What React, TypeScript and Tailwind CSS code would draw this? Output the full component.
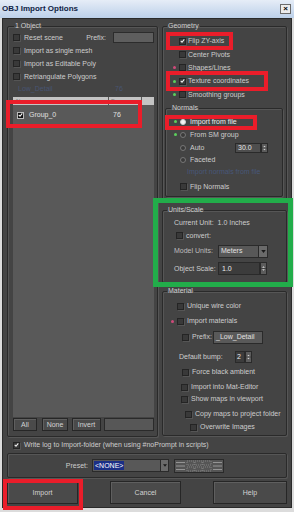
import React from 'react';

const Check = ({ on = false }: { on?: boolean }) => (
  <span className="inline-flex w-[7px] h-[7px] shrink-0 items-center justify-center border border-[#242424] bg-[#393939] shadow-[1px_1px_0_#555]">
    {on && (
      <svg viewBox="0 0 7 7" className="w-[6px] h-[6px]">
        <path d="M1 3.4 L2.8 5.2 L6 1.2" fill="none" stroke="#f4f4f4" strokeWidth="1.5" />
      </svg>
    )}
  </span>
);

const Radio = ({ on = false }: { on?: boolean }) =>
  on ? (
    <span className="w-[6px] h-[6px] shrink-0 rounded-full bg-[#f4f4f4] border border-[#cfcfcf]" />
  ) : (
    <span className="w-[6px] h-[6px] shrink-0 rounded-full bg-[#3a3a3a] border border-[#777]" />
  );

const Dot = ({ c }: { c: string }) => <span className={`w-[3px] h-[3px] shrink-0 rounded-full ${c}`} />;

const Spin = ({ h = 'h-[10px]' }: { h?: string }) => (
  <span className={`w-[7px] ${h} flex flex-col border border-[#2a2a2a] bg-[#5c5c5c]`}>
    <svg viewBox="0 0 7 10" className="w-full h-full">
      <path d="M1.5 4 L3.5 2 L5.5 4 Z M1.5 6 L3.5 8 L5.5 6 Z" fill="#d8d8d8" />
      <line x1="0" y1="5" x2="7" y2="5" stroke="#2a2a2a" strokeWidth="0.8" />
    </svg>
  </span>
);

const Btn = ({ children, w }: { children: React.ReactNode; w: string }) => (
  <div className={`${w} h-full flex items-center justify-center bg-[#4a4a4a] border border-[#262626] shadow-[inset_1px_1px_0_#5f5f5f] text-[#d2d2d2]`}>
    {children}
  </div>
);

const GROUP = 'min-w-0 border border-[#2a2a2a] rounded-[2px] shadow-[1px_1px_0_#565656,inset_1px_1px_0_#565656] p-0 m-0';

export default function App() {
  return (
    <div className="relative w-[294px] h-[512px] overflow-hidden bg-[#dcdcdc] flex flex-col text-[7px] leading-[8px] text-[#cdcdcd] font-['Liberation_Sans',Arial,sans-serif]">
      {/* title bar */}
      <div className="h-[18px] shrink-0 flex items-center justify-between pl-[2px] pr-[3px] bg-linear-to-b from-[#e6edf7] to-[#bcd0e9]">
        <span className="font-bold text-[8px] text-[#0f1d44]">OBJ Import Options</span>
        <span className="w-[11px] h-[10px] flex items-center justify-center bg-[#ececec] border border-[#6b6b6b] text-[8px] font-bold text-black leading-none">
          ×
        </span>
      </div>

      {/* body */}
      <div className="flex-1 mx-[2px] mb-[4px] bg-[#444444] border border-[#2a2a2a] flex flex-col px-[4px] pt-[3px]">
        <div className="flex gap-[4px] items-start">
          {/* 1 Object */}
          <fieldset className={`${GROUP} w-[151px]`}>
            <legend className="ml-[6px] px-[1px] leading-[8px] text-[#cfcfcf]">1 Object</legend>
            <div className="flex flex-col pl-[5px] pr-[3px] pt-[1px] pb-[5px]">
              <div className="h-[13px] flex items-center gap-[4px]">
                <Check />
                <span>Reset scene</span>
                <span className="ml-auto mr-[3px]">Prefix:</span>
                <span className="w-[41px] h-[11px] bg-[#5e5e5e] border border-[#2c2c2c]" />
              </div>
              <div className="h-[13px] flex items-center gap-[4px]">
                <Check />
                <span>Import as single mesh</span>
              </div>
              <div className="h-[13px] flex items-center gap-[4px]">
                <Check />
                <span>Import as Editable Poly</span>
              </div>
              <div className="h-[13px] flex items-center gap-[4px]">
                <Check />
                <span>Retriangulate Polygons</span>
              </div>
              <div className="h-[12px] flex items-center pl-[5px] text-[#4a5d86] opacity-70">
                <span className="w-[97px]">Low_Detail</span>
                <span>76</span>
              </div>
              <div className="mt-[2px] h-[320px] bg-[#595959] flex flex-col">
                <div className="h-[8px] flex gap-[1px] text-[#7a7a7a] text-[6px] leading-[8px]">
                  <span className="w-[95px] bg-[#c4c4c4] pl-[3px]">Name</span>
                  <span className="w-[32px] bg-[#c4c4c4] pl-[2px]">Faces</span>
                  <span className="flex-1 bg-[#c4c4c4]" />
                </div>
                <div className="h-[20px] flex items-center pl-[4px]">
                  <div className="w-[96px] flex items-center gap-[5px]">
                    <span className="inline-flex w-[7px] h-[7px] items-center justify-center bg-[#111] border border-[#bbb]">
                      <svg viewBox="0 0 7 7" className="w-[6px] h-[6px]">
                        <path d="M1 3.4 L2.8 5.2 L6 1.2" fill="none" stroke="#fff" strokeWidth="1.5" />
                      </svg>
                    </span>
                    <span className="text-[#e0e0e0]">Group_0</span>
                  </div>
                  <span className="text-[#e0e0e0]">76</span>
                </div>
              </div>
              <div className="mt-[1px] h-[13px] flex">
                <Btn w="w-[24px]">All</Btn>
                <div className="w-[5px]" />
                <Btn w="w-[26px]">None</Btn>
                <div className="w-[4px]" />
                <Btn w="w-[29px]">Invert</Btn>
                <div className="w-[3px]" />
                <span className="flex-1 h-full bg-[#575757] border border-[#2a2a2a]" />
              </div>
            </div>
          </fieldset>

          {/* right column */}
          <div className="w-[125px] flex flex-col">
            <fieldset className={GROUP}>
              <legend className="ml-[4px] px-[1px] leading-[8px] text-[#cfcfcf]">Geometry</legend>
              <div className="flex flex-col pt-[4px] pb-[2px]">
                <div className="h-[14px] flex items-center pl-[10px] gap-[3px]">
                  <span className="w-[3px]" />
                  <Check on />
                  <span className="ml-[-1px]">Flip ZY-axis</span>
                </div>
                <div className="h-[13px] flex items-center pl-[10px] gap-[3px]">
                  <span className="w-[3px]" />
                  <Check />
                  <span className="ml-[-1px]">Center Pivots</span>
                </div>
                <div className="h-[13px] flex items-center pl-[10px] gap-[3px]">
                  <Dot c="bg-[#d04a7a]" />
                  <Check />
                  <span className="ml-[-1px]">Shapes/Lines</span>
                </div>
                <div className="h-[14px] flex items-center pl-[10px] gap-[3px]">
                  <Dot c="bg-[#5ccf5c]" />
                  <Check on />
                  <span className="ml-[-1px]">Texture coordinates</span>
                </div>
                <div className="h-[13px] flex items-center pl-[10px] gap-[3px]">
                  <Dot c="bg-[#5ccf5c]" />
                  <Check />
                  <span className="ml-[-1px]">Smoothing groups</span>
                </div>

                <fieldset className={`${GROUP} mt-[3px] ml-[2px] mr-[3px]`}>
                  <legend className="ml-[5px] px-[1px] leading-[8px] text-[#cfcfcf]">Normals</legend>
                  <div className="flex flex-col pt-[3px] pb-[3px]">
                    <div className="h-[13px] flex items-center pl-[8px]">
                      <Dot c="bg-[#5ccf5c]" />
                      <span className="w-[3px]" />
                      <Radio on />
                      <span className="ml-[4px] text-[#ececec]">Import from file</span>
                    </div>
                    <div className="h-[13px] flex items-center pl-[8px]">
                      <Dot c="bg-[#5ccf5c]" />
                      <span className="w-[3px]" />
                      <Radio />
                      <span className="ml-[4px]">From SM group</span>
                    </div>
                    <div className="h-[13px] flex items-center pl-[14px] pr-[14px]">
                      <Radio />
                      <span className="ml-[4px]">Auto</span>
                      <span className="ml-auto w-[26px] h-[10px] bg-[#4e4e4e] border border-[#2a2a2a] text-[#e6e6e6] pl-[2px] leading-[8px]">
                        30.0
                      </span>
                      <Spin />
                    </div>
                    <div className="h-[12px] flex items-center pl-[14px]">
                      <Radio />
                      <span className="ml-[4px]">Faceted</span>
                    </div>
                    <div className="h-[12px] flex items-center pl-[21px] text-[#4a5d86] opacity-80">
                      Import normals from file
                    </div>
                    <div className="mt-[2px] h-[13px] flex items-center pl-[14px] gap-[3px]">
                      <Check />
                      <span>Flip Normals</span>
                    </div>
                  </div>
                </fieldset>
              </div>
            </fieldset>

            <fieldset className={`${GROUP} mt-[6px]`}>
              <legend className="ml-[4px] px-[1px] leading-[8px] text-[#cfcfcf]">Units/Scale</legend>
              <div className="flex flex-col pt-[3px] pb-[6px]">
                <div className="h-[12px] flex items-center pl-[11px]">Current Unit:&nbsp; 1.0 Inches</div>
                <div className="h-[13px] flex items-center pl-[13px] gap-[3px]">
                  <Check />
                  <span>convert:</span>
                </div>
                <div className="mt-[2px] h-[14px] flex items-center pl-[11px]">
                  <span className="w-[44px] text-[#bdbdbd]">Model Units:</span>
                  <span className="w-[50px] h-[13px] flex items-center bg-[#585858] border border-[#2a2a2a]">
                    <span className="flex-1 pl-[2px] text-[#e2e2e2]">Meters</span>
                    <span className="w-[9px] h-full flex items-center justify-center bg-[#6a6a6a] border-l border-[#2a2a2a]">
                      <svg viewBox="0 0 6 4" className="w-[5px] h-[3px]">
                        <path d="M0 0 L6 0 L3 4 Z" fill="#1a1a1a" />
                      </svg>
                    </span>
                  </span>
                </div>
                <div className="mt-[3px] h-[15px] flex items-center pl-[11px]">
                  <span className="w-[44px]">Object Scale:</span>
                  <span className="w-[42px] h-[13px] flex items-center bg-[#3c3c3c] border border-[#2a2a2a] pl-[3px] text-[#ececec]">
                    1.0
                  </span>
                  <Spin h="h-[13px]" />
                </div>
              </div>
            </fieldset>

            <fieldset className={`${GROUP} mt-[4px]`}>
              <legend className="ml-[4px] px-[1px] leading-[8px] text-[#cfcfcf]">Material</legend>
              <div className="flex flex-col pt-[5px] pb-[2px]">
                <div className="h-[12px] flex items-center pl-[14px] gap-[3px]">
                  <Check />
                  <span>Unique wire color</span>
                </div>
                <div className="mt-[3px] h-[12px] flex items-center pl-[8px] gap-[3px]">
                  <Dot c="bg-[#d04a7a]" />
                  <Check />
                  <span>Import materials</span>
                </div>
                <div className="mt-[3px] h-[14px] flex items-center pl-[19px]">
                  <Check />
                  <span className="ml-[3px] w-[21px]">Prefix:</span>
                  <span className="w-[50px] h-[13px] flex items-center bg-[#595959] border border-[#2a2a2a] pl-[2px] text-[#e0e0e0]">
                    _Low_Detail
                  </span>
                </div>
                <div className="mt-[6px] h-[14px] flex items-center pl-[16px]">
                  <span className="w-[56px]">Default bump:</span>
                  <span className="w-[10px] h-[12px] flex items-center bg-[#3c3c3c] border border-[#2a2a2a] pl-[1px] text-[#ececec]">
                    2
                  </span>
                  <Spin h="h-[12px]" />
                </div>
                <div className="mt-[2px] h-[12px] flex items-center pl-[19px] gap-[3px]">
                  <Check />
                  <span>Force black ambient</span>
                </div>
                <div className="mt-[3px] h-[12px] flex items-center pl-[18px] gap-[3px]">
                  <Check />
                  <span>Import into Mat-Editor</span>
                </div>
                <div className="h-[12px] flex items-center pl-[18px] gap-[3px]">
                  <Check />
                  <span>Show maps in viewport</span>
                </div>
                <div className="mt-[3px] h-[12px] flex items-center pl-[22px] gap-[3px]">
                  <Check />
                  <span>Copy maps to project folder</span>
                </div>
                <div className="mt-[1px] h-[12px] flex items-center pl-[27px] gap-[3px]">
                  <Check />
                  <span>Overwrite Images</span>
                </div>
              </div>
            </fieldset>
          </div>
        </div>

        {/* write log */}
        <div className="mt-[2px] h-[12px] flex items-center pl-[6px] gap-[4px]">
          <Check on />
          <span>Write log to Import-folder (when using #noPrompt in scripts)</span>
        </div>

        {/* preset */}
        <div className="mt-[2px] h-[25px] flex items-center border border-[#2a2a2a] rounded-[2px] shadow-[1px_1px_0_#565656,inset_1px_1px_0_#565656]">
          <span className="w-[84px] text-right pr-[4px]">Preset:</span>
          <span className="w-[77px] h-[13px] flex items-center bg-[#585858] border border-[#2a2a2a]">
            <span className="ml-[1px] px-[1px] h-[9px] flex items-center bg-[#1b2f86] text-white">&lt;NONE&gt;</span>
            <span className="ml-auto w-[8px] h-full flex items-center justify-center bg-[#6a6a6a] border-l border-[#2a2a2a]">
              <svg viewBox="0 0 6 4" className="w-[4px] h-[3px]">
                <path d="M0 0 L6 0 L3 4 Z" fill="#1a1a1a" />
              </svg>
            </span>
          </span>
          <svg viewBox="0 0 50 14" className="ml-[5px] w-[50px] h-[14px]">
            <rect x="0.5" y="0.5" width="49" height="13" fill="#555555" stroke="#2a2a2a" />
            <g stroke="#a4a4a4" strokeWidth="0.8">
              <line x1="2" y1="3.5" x2="11" y2="3.5" />
              <line x1="2" y1="7" x2="11" y2="7" />
              <line x1="2" y1="10.5" x2="11" y2="10.5" />
              <line x1="39" y1="3.5" x2="48" y2="3.5" />
              <line x1="39" y1="7" x2="48" y2="7" />
              <line x1="39" y1="10.5" x2="48" y2="10.5" />
            </g>
            <g fill="none" stroke="#959595" strokeWidth="0.7" strokeDasharray="1 1">
              <rect x="13" y="2" width="7" height="4" />
              <rect x="21" y="2" width="7" height="4" />
              <rect x="29" y="2" width="8" height="4" />
              <rect x="13" y="8" width="7" height="4" />
              <rect x="21" y="8" width="7" height="4" />
              <rect x="29" y="8" width="8" height="4" />
            </g>
          </svg>
        </div>

        {/* buttons */}
        <div className="mt-[3px] h-[23px] flex justify-between">
          <Btn w="w-[71px]">Import</Btn>
          <Btn w="w-[71px]">Cancel</Btn>
          <Btn w="w-[74px]">Help</Btn>
        </div>
      </div>

      {/* annotations */}
      <div className="absolute left-[6px] top-[100px] w-[136px] h-[28px] border-4 border-[#ea1d2a]" />
      <div className="absolute left-[166px] top-[32px] w-[67px] h-[18px] border-4 border-[#ea1d2a]" />
      <div className="absolute left-[166px] top-[71px] w-[102px] h-[20px] border-4 border-[#ea1d2a]" />
      <div className="absolute left-[165px] top-[115px] w-[92px] h-[15px] border-4 border-[#ea1d2a]" />
      <div className="absolute left-[3px] top-[479px] w-[80px] h-[31px] border-4 border-[#ea1d2a]" />
      <div className="absolute left-[153px] top-[198px] w-[140px] h-[89px] border-[5px] border-[#22ad4a]" />
    </div>
  );
}
